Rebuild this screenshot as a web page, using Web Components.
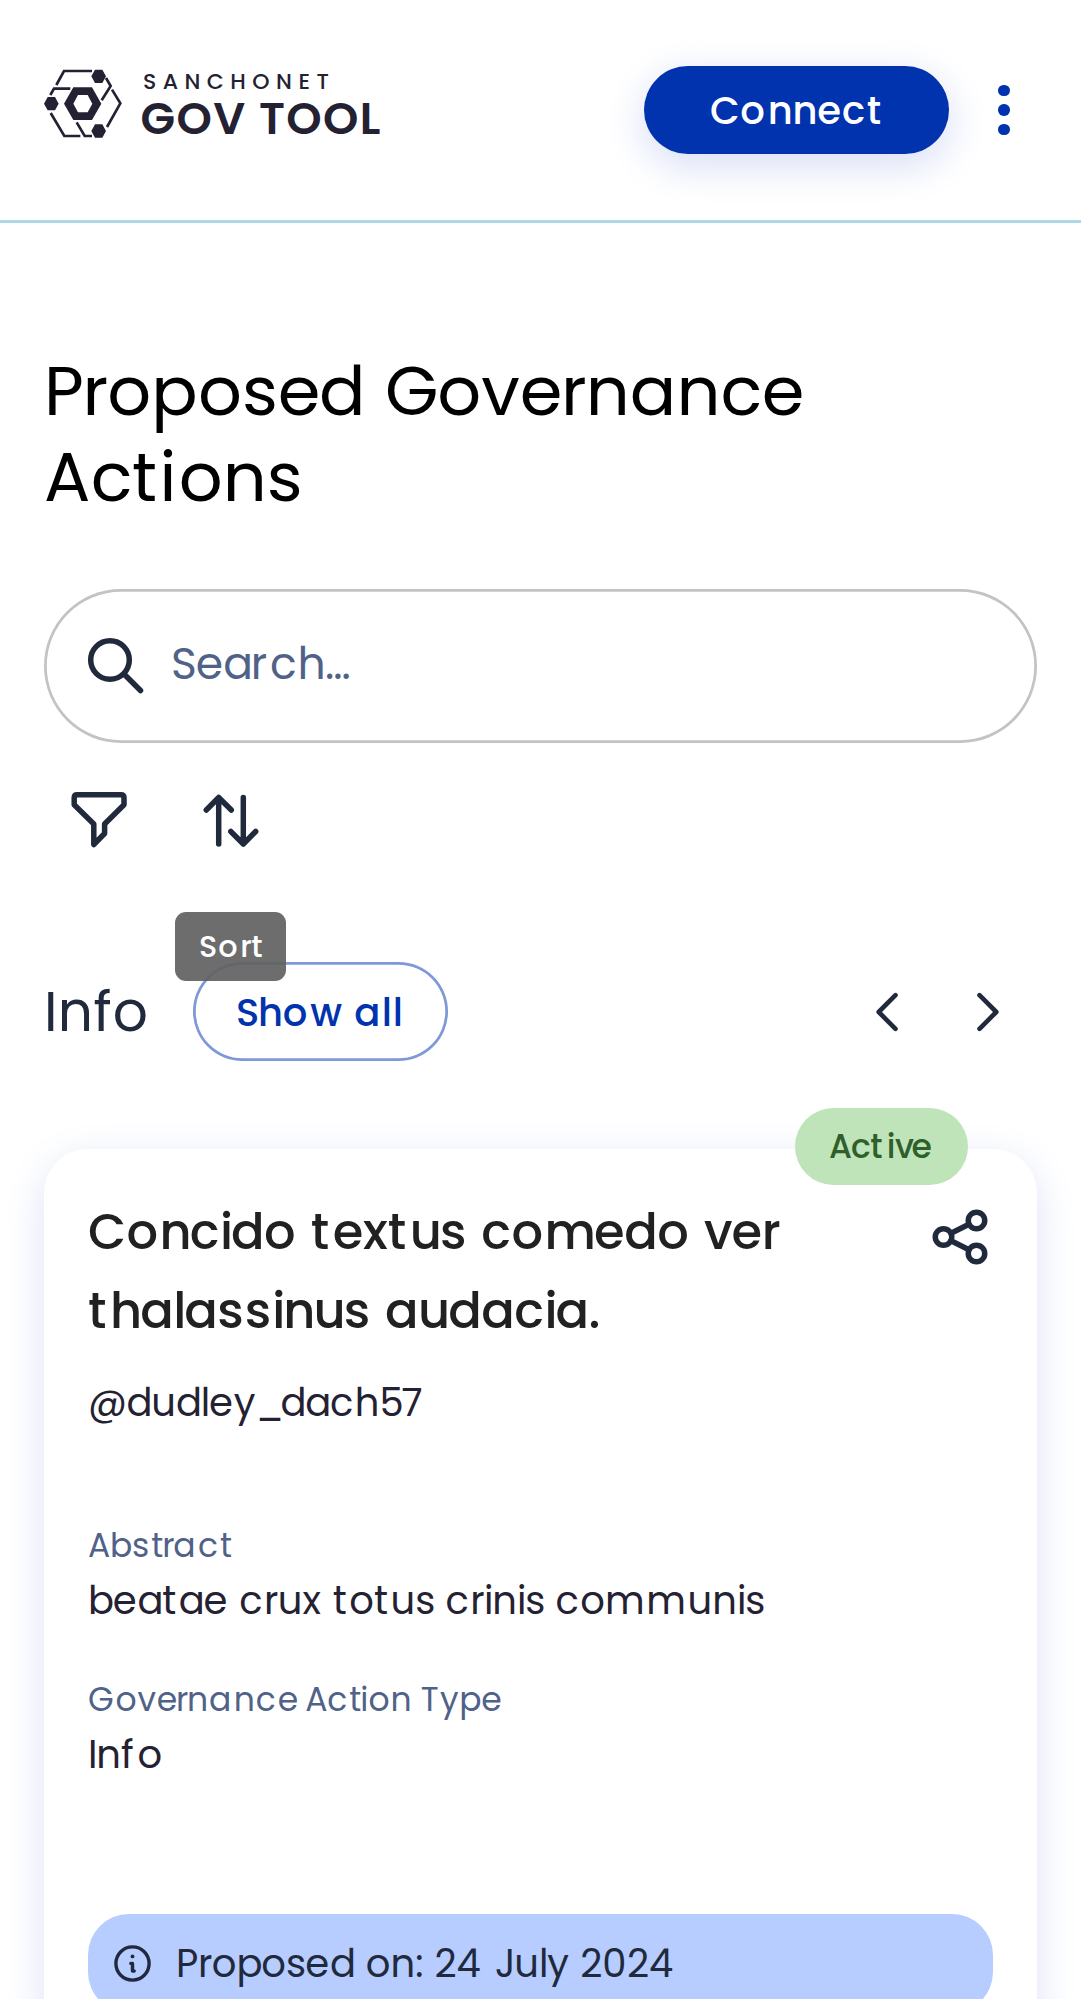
<!DOCTYPE html>
<html lang="en">
<head>
<meta charset="utf-8">
<title>GovTool</title>
<style>
html,body{margin:0;padding:0;background:#fff}
body{height:1999px;overflow:hidden;font-family:Poppins,Inter,"Open Sans",sans-serif;color:#242232}
</style>
</head>
<body>
<gov-app></gov-app>
<script>
const define = (name, html, init) => {
  const t = document.createElement('template');
  t.innerHTML = html;
  customElements.define(name, class extends HTMLElement {
    connectedCallback() {
      if (this.shadowRoot) return;
      this.attachShadow({mode: 'open'}).append(t.content.cloneNode(true));
      if (init) init.call(this, this.shadowRoot);
    }
  });
};

const SCALE = 2.75;
const pen = document.createElement('canvas').getContext('2d');

/* Hinted advances, in CSS pixels, that differ from the rounded natural width. Key: size/weight. */
const hinted = {
  '11/500': {o: 8},
  '12/400': {G: 10, a: 9, c: 8, s: 7, T: 7},
  '12/500': {t: 6, v: 6, e: 8},
  '14/400': {t: 6, m: 15, f: 6, c: 9, _: 9, '4': 10, '5': 8},
  '14/500': {o: 10, c: 9, t: 6, a: 10},
  '16/400': {a: 10, r: 7},
  '18/500': {o: 12, t: 8, m: 18, n: 11, h: 11, u: 11, i: 4, l: 4},
  '25/400': {t: 10, i: 7}
};

/* Text laid out on whole CSS pixels, then enlarged by the interface scale. A "|" breaks the line. */
define('gov-text', `<style>:host{display:block;flex:none}svg{display:block;overflow:visible}text{fill:currentColor;white-space:pre;font-kerning:none}</style><svg><text></text></svg>`,
function (root) {
  const size = +this.getAttribute('size'), line = +this.getAttribute('line');
  const weight = this.getAttribute('weight') || 400;
  const table = hinted[size + '/' + weight] || {};
  const lines = this.textContent.trim().split('|');
  pen.font = `${weight} 1000px Poppins, Inter, sans-serif`;
  const xs = [], ys = [];
  let widest = 0;
  lines.forEach((str, row) => {
    let x = 0;
    for (const c of row < lines.length - 1 ? str + ' ' : str) {
      xs.push((x * SCALE).toFixed(2));
      ys.push((row * line + line / 2 + .35 * size * SCALE).toFixed(2));
      x += table[c] || Math.round(pen.measureText(c).width * size / 1000);
    }
    widest = Math.max(widest, x * SCALE);
  });
  const svg = root.querySelector('svg'), t = root.querySelector('text');
  svg.setAttribute('width', widest);
  svg.setAttribute('height', line * lines.length);
  t.setAttribute('x', xs.join(' '));
  t.setAttribute('y', ys.join(' '));
  t.style.fontSize = size * SCALE + 'px';
  t.style.fontWeight = weight;
  t.textContent = lines.join(' ');
  this.style.width = widest + 'px';
});

/* A wordmark line, tracked so that it spans the width given in "span". */
define('gov-wordmark', `<style>:host{display:block;white-space:pre}span{display:inline-block;vertical-align:top}</style><span><slot></slot></span>`,
function (root) {
  const s = root.querySelector('span');
  s.style.fontSize = this.getAttribute('size') + 'px';
  s.style.lineHeight = this.getAttribute('line') + 'px';
  s.style.fontWeight = this.getAttribute('weight');
  this.style.height = this.getAttribute('line') + 'px';
  const track = (+this.getAttribute('span') - s.getBoundingClientRect().width) / (this.textContent.length - 1);
  s.style.letterSpacing = track + 'px';
  s.style.marginRight = -track + 'px';
});

const shapes = {
  search: '<circle cx="22" cy="22" r="19.3"/><path d="M36 36 52.5 52.5"/>',
  filter: '<path d="M11 7.7H55Q58 7.7 58 10.7V17.8L38.6 37V46.5L27.8 57.5V37L8.2 17.8V10.7Q8.2 7.7 11 7.7Z"/>',
  sort: '<path d="M20.7 57V10.5M8.3 23 20.7 10.5 33.3 23M45.3 10.5V57M32.8 44.5 45.3 57 57.7 44.5"/>',
  left: '<path d="M41.5 16.2 24.7 33 41.5 49.8"/>',
  right: '<path d="M24.5 16.2 41.3 33 24.5 49.8"/>',
  share: '<circle cx="49.5" cy="16.5" r="8.25"/><circle cx="49.5" cy="49.5" r="8.25"/><circle cx="16.5" cy="33" r="8.25"/><path d="M24 29.3 42 20.2M24 36.7 42 45.8"/>'
};
define('gov-icon', `<style>:host{display:block;width:66px;height:66px;flex:none;color:#212a3d}svg{display:block;overflow:visible;fill:none;stroke:currentColor;stroke-width:5.5;stroke-linecap:round;stroke-linejoin:round}</style><svg width="66" height="66" viewBox="0 0 66 66"></svg>`,
function (root) {
  const v = root.querySelector('svg'), n = this.getAttribute('name');
  v.innerHTML = shapes[n];
  if (n === 'left' || n === 'right') v.style.strokeWidth = 4.6;
});

define('gov-logo', `<style>
:host{display:flex;gap:18.5px;align-items:flex-start}
svg{display:block;margin-top:68.6px}
.words{display:flex;flex-direction:column;gap:2px;margin-top:69.5px}
.small{margin-left:2.4px}
</style>
<svg width="78" height="69" viewBox="42 56 234 207" fill="#242232">
<g fill="none" stroke="#242232" stroke-width="8"><path d="M79 104 102 62H186"/><path d="M61 134 72 115H121"/><path d="M228 83 242 107 215 150"/><path d="M246 118 271 159 231 230"/><path d="M62 188 103 257H151"/><path d="M140 216 164 257H186"/></g>
<path d="M195 58h22l11 20-11 20h-22l-11-20zM53 140h22l11 20-11 20H53l-11-20zM195 222h22l11 20-11 20h-22l-11-20z"/>
<path fill-rule="evenodd" d="M130 111h56l28 49-28 49h-56l-28-49zM144 134l-14 26 14 26h29l14-26-14-26z"/>
</svg>
<div class="words"><gov-wordmark class="small" size="22" line="24" weight="500" span="186">SANCHONET</gov-wordmark><gov-wordmark size="45" line="46" weight="600" span="240">GOV TOOL</gov-wordmark></div>`);

define('gov-header', `<style>
:host{display:flex;height:220px;border-bottom:3px solid #add8e6;padding:0 44px;align-items:flex-start}
.connect{box-sizing:border-box;padding-top:1px;margin:66px 0 0 auto;width:305px;height:88px;border-radius:44px;background:#0033ad;color:#fff;display:flex;justify-content:center;align-items:center;box-shadow:0 11px 41px #d6dcf5}
.menu{margin:66px 0 0 22px;width:66px;height:88px;display:flex;flex-direction:column;align-items:center;justify-content:center;gap:7.9px}
i{width:11.4px;height:11.4px;border-radius:50%;background:#0033ad}
</style><gov-logo></gov-logo><div class="connect"><gov-text size="14" line="58" weight="500">Connect</gov-text></div><div class="menu"><i></i><i></i><i></i></div>`);

define('gov-search', `<style>
:host{display:flex;box-sizing:border-box;height:154px;box-shadow:inset 0 0 0 2.75px #c3c3c3;border-radius:77px;padding:49.6px 0 0 44px}
div{margin:-5.5px 0 0 17px;color:#506288}
</style><gov-icon name="search"></gov-icon><div></div>`,
function (root) {
  root.querySelector('div').innerHTML = `<gov-text size="16" line="62">${this.getAttribute('placeholder')}</gov-text>`;
});

define('gov-tooltip', `<style>:host{display:flex;box-sizing:border-box;padding-bottom:2px;align-items:center;justify-content:center;position:absolute;z-index:2;width:110.4px;height:68.5px;border-radius:11px;background:rgba(97,97,97,.92);color:#fff}</style><gov-text size="11" line="40" weight="500">Sort</gov-text>`);

define('gov-tools', `<style>
:host{display:flex;gap:65.7px;padding-left:22px}
.sort{position:relative}
gov-tooltip{left:-22.4px;top:125.3px}
</style><gov-icon name="filter"></gov-icon><div class="sort"><gov-icon name="sort"></gov-icon><gov-tooltip></gov-tooltip></div>`);

define('gov-section-head', `<style>
:host{display:flex;height:99px;align-items:center}
.name{width:148.5px;color:#212a3d}
.all{box-sizing:border-box;padding-top:1.4px;width:255.6px;height:99px;box-shadow:inset 0 0 0 2.75px #7f99d6;border-radius:49.5px;color:#0033ad;display:flex;align-items:center;justify-content:center}
.nav{margin-left:auto;display:flex;gap:35px;padding-right:16px}
</style><div class="name"><gov-text size="20" line="80">Info</gov-text></div><div class="all"><gov-text size="14" line="58" weight="500">Show all</gov-text></div><div class="nav"><gov-icon name="left"></gov-icon><gov-icon name="right"></gov-icon></div>`);

define('gov-badge', `<style>:host{display:flex;box-sizing:border-box;padding-bottom:2px;align-items:center;justify-content:center;position:absolute;width:173px;height:77px;border-radius:38.5px;background:#c0e4ba;color:#2f5f2a}</style><gov-text size="12" line="46" weight="500">Active</gov-text>`);

define('gov-field', `<style>:host{display:block}.l{color:#506288}.v{margin-top:5px}</style><div></div>`,
function (root) {
  root.querySelector('div').innerHTML =
    `<gov-text class="l" size="12" line="44">${this.getAttribute('label')}</gov-text>` +
    `<gov-text class="v" size="14" line="58">${this.getAttribute('value')}</gov-text>`;
});

define('gov-card', `<style>
:host{display:block;position:relative;box-sizing:border-box;height:1100px;border-radius:44px;background:#fff;box-shadow:0 11px 41px #dde3f5;padding:42.4px 44px 0}
gov-badge{right:69px;top:-41.3px}
.top{display:flex;justify-content:space-between;color:#212121}
.top gov-icon{margin:12.6px .4px 0 0}
.user{margin-top:24.2px}
.f1{margin-top:91.2px}.f2{margin-top:47px}
.date{margin-top:129.9px;height:99px;border-radius:41px;background:#b7ccff;color:#212a3d;display:flex;align-items:center;padding-left:25.7px;gap:25px}
</style>
<gov-badge></gov-badge>
<div class="top"><gov-text size="18" line="79" weight="500">Concido textus comedo ver|thalassinus audacia.</gov-text><gov-icon name="share"></gov-icon></div>
<gov-text class="user" size="14" line="58">@dudley_dach57</gov-text>
<gov-field class="f1" label="Abstract" value="beatae crux totus crinis communis"></gov-field>
<gov-field class="f2" label="Governance Action Type" value="Info"></gov-field>
<div class="date"><svg width="37" height="37" viewBox="0 0 37 37" fill="none" stroke="#212a3d" stroke-width="3.4" stroke-linecap="round" stroke-linejoin="round"><circle cx="18.5" cy="18.5" r="16.6"/><path d="M16.8 18.4h1.7v7.6h1.7"/><circle cx="18.5" cy="11.4" r="1.9" fill="#212a3d" stroke="none"/></svg><gov-text size="14" line="58">Proposed on: 24 July 2024</gov-text></div>`);

define('gov-app', `<style>
:host{display:block}
main{padding:0 44px}
.title{margin-top:125px;color:#000}
gov-search{margin-top:68.5px}
gov-tools{margin-top:44.7px}
gov-section-head{margin-top:109.3px}
gov-card{margin-top:88px}
</style>
<gov-header></gov-header>
<main>
<gov-text class="title" size="25" line="86">Proposed Governance|Actions</gov-text>
<gov-search placeholder="Search..."></gov-search>
<gov-tools></gov-tools>
<gov-section-head></gov-section-head>
<gov-card></gov-card>
</main>`);
</script>
</body>
</html>
